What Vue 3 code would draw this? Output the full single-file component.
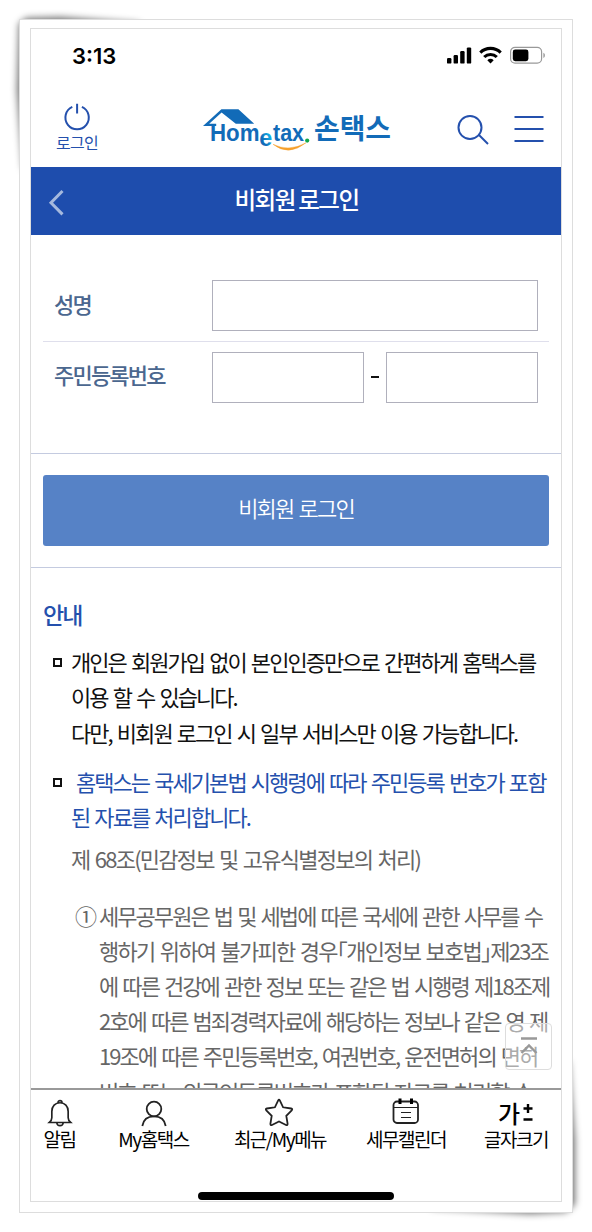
<script setup>
import { ref } from 'vue'

const name = ref('')
const idFront = ref('')
const idBack = ref('')

const notices = [
    {
        type: 'plain',
        lines: ['개인은 회원가입 없이 본인인증만으로 간편하게 홈택스를', '이용 할 수 있습니다.', '다만, 비회원 로그인 시 일부 서비스만 이용 가능합니다.']
    },
    {
        type: 'link',
        lines: ['홈택스는 국세기본법 시행령에 따라 주민등록 번호가 포함', '된 자료를 처리합니다.']
    }
]

const clause = [
    '세무공무원은 법 및 세법에 따른 국세에 관한 사무를 수',
    '행하기 위하여 불가피한 경우「개인정보 보호법」제23조',
    '에 따른 건강에 관한 정보 또는 같은 법 시행령 제18조제',
    '2호에 따른 범죄경력자료에 해당하는 정보나 같은 영 제',
    '19조에 따른 주민등록번호, 여권번호, 운전면허의 면허',
    '번호 또는 외국인등록번호가 포함된 자료를 처리할 수'
]

const tabs = [
    { icon: 'bell', label: '알림' },
    { icon: 'user', label: 'My홈택스' },
    { icon: 'star', label: '최근/My메뉴' },
    { icon: 'calendar', label: '세무캘린더' },
    { icon: 'size', label: '글자크기' }
]
</script>

<template>
    <div class="stage">
        <svg class="curl" width="592" height="1232" viewBox="0 0 592 1232">
            <polygon points="19,24 26,18 60,17 140,23 100,100 23,170 17,90" />
            <polygon points="569,1060 575,1140 575,1204 566,1212 530,1214 430,1208 500,1150" />
        </svg>
        <div class="frame">
            <div class="phone">
                <div class="status">
                    <span class="time">3:13</span>
                    <svg width="100" height="20" viewBox="0 0 100 20">
                        <rect x="1" y="12" width="4.4" height="5.6" rx="1.2" />
                        <rect x="7.6" y="9" width="4.4" height="8.6" rx="1.2" />
                        <rect x="14.2" y="5" width="4.4" height="12.6" rx="1.2" />
                        <rect x="20.8" y="1.4" width="4.4" height="16.2" rx="1.2" />
                        <g fill="none" stroke="#000" stroke-width="3.1">
                            <path d="M34.3 6.6a14.5 14.5 0 0 1 20.4 0" />
                            <path d="M38.2 11a9 9 0 0 1 12.6 0" />
                        </g>
                        <path d="M44.5 17.6l-3.2-3.4a4.8 4.8 0 0 1 6.4 0z" />
                        <rect x="64.6" y="1.4" width="31" height="15.8" rx="4.4" fill="none" stroke="#999" stroke-width="1.2" />
                        <rect x="66.8" y="3.6" width="15.6" height="11.6" rx="2.4" />
                        <path d="M97.4 6.8c2 .8 2 4.4 0 5.2z" fill="#999" />
                    </svg>
                </div>

                <header class="header">
                    <div class="login">
                        <svg width="28" height="28" viewBox="0 0 28 28">
                            <path d="M9.3 3.9a11.7 11.7 0 1 0 9.6 0M14.1 .8v9.8" />
                        </svg>
                        <span>로그인</span>
                    </div>
                    <svg class="logo" width="190" height="50" viewBox="202 105 190 50">
                        <defs>
                            <linearGradient id="eFill" x1="0" y1="1" x2="1" y2="0">
                                <stop offset=".35" stop-color="#126bb8" />
                                <stop offset=".75" stop-color="#12b5ea" />
                            </linearGradient>
                        </defs>
                        <path d="M203 126l18.4-16.8h17L254.2 123.7h-18.4l-14.2-11.2-12.4 11.3h7v2.2z" fill="#126bb8" />
                        <text class="latin" x="210" y="140.8" textLength="49.500" lengthAdjust="spacingAndGlyphs">Hom</text>
                        <text class="latin" x="259.3" y="146.3" textLength="13" lengthAdjust="spacingAndGlyphs" fill="url(#eFill)">e</text>
                        <text class="latin" x="273" y="140.8" textLength="31" lengthAdjust="spacingAndGlyphs">tax</text>
                        <path d="M273 144.3q15.500 12.500 33-1.500q-17 9.500-33 1.500z" fill="#f6a02c" stroke="#f6a02c" stroke-width=".4" />
                        <circle cx="307.200" cy="140.600" r="2.100" fill="#13a84b" />
                        <text class="hangul" x="314" y="139" textLength="77" lengthAdjust="spacingAndGlyphs">손택스</text>
                    </svg>
                    <svg class="search" width="34" height="34" viewBox="0 0 34 34">
                        <circle cx="14" cy="14.500" r="11.500" />
                        <path d="M22.500 21.500L32 31" />
                    </svg>
                    <svg class="menu" width="30" height="30" viewBox="0 0 30 30">
                        <path d="M.5 3h29M.5 15h29M.5 27h29" />
                    </svg>
                </header>

                <div class="titlebar">
                    <svg width="18" height="28" viewBox="0 0 18 28">
                        <path d="M15.500 2L4 13.700l11.500 11.700" />
                    </svg>
                    <h1>비회원 로그인</h1>
                </div>

                <section class="form">
                    <div class="field">
                        <label>성명</label>
                        <input v-model="name" type="text">
                    </div>
                    <div class="field">
                        <label>주민등록번호</label>
                        <input v-model="idFront" type="text">
                        <span class="dash"></span>
                        <input v-model="idBack" type="password">
                    </div>
                </section>

                <section class="action">
                    <button>비회원 로그인</button>
                </section>

                <section class="guide">
                    <h2>안내</h2>
                    <ul>
                        <li v-for="item in notices" :key="item.type" :class="item.type">
                            <p v-for="line in item.lines" :key="line">{{ line }}</p>
                        </li>
                    </ul>
                    <p class="article">제 68조(민감정보 및 고유식별정보의 처리)</p>
                    <div class="clause">
                        <span class="num">①</span>
                        <div>
                            <p v-for="line in clause" :key="line">{{ line }}</p>
                        </div>
                    </div>
                    <div class="totop">
                        <svg width="20" height="22" viewBox="0 0 20 22">
                            <path d="M2 2.500h16M2.500 17L10 9.500l7.500 7.500" />
                        </svg>
                    </div>
                </section>

                <nav class="tabs">
                    <div v-for="tab in tabs" :key="tab.icon" class="tab">
                        <svg v-if="tab.icon === 'bell'" width="26" height="30" viewBox="0 0 28 30">
                            <path d="M2.500 25.200h23c-2-1.800-2.700-3-2.700-5.200v-6.500c0-6-3.600-9.500-8.800-9.500s-8.800 3.500-8.800 9.500V20c0 2.200-.7 3.400-2.700 5.200zM11.800 4c0-3 4.400-3 4.400 0M10.500 25.500c.5 4.200 6.500 4.200 7 0" />
                        </svg>
                        <svg v-else-if="tab.icon === 'user'" width="28" height="30" viewBox="0 0 28 30">
                            <circle cx="14" cy="11" r="7.300" />
                            <path d="M2.300 28c1-6.500 5.700-9.700 11.700-9.700s10.700 3.200 11.700 9.700" />
                        </svg>
                        <svg v-else-if="tab.icon === 'star'" width="30" height="30" viewBox="0 0 30 30">
                            <path d="M13.200 2.400q.8-1.500 1.600 0l3.300 6.900 8 1.200q1.800.4.600 1.800l-5.400 5.500 1.300 8q0 1.800-1.600 1.200l-7-3.500-7 3.500q-1.600.6-1.600-1.200l1.300-8-5.400-5.500q-1.200-1.400.6-1.800l8-1.200z" />
                        </svg>
                        <svg v-else-if="tab.icon === 'calendar'" width="28" height="30" viewBox="0 0 28 30">
                            <rect x="1.500" y="3.500" width="24.500" height="21.500" rx="3.500" />
                            <path class="thin" d="M1.500 9.500h24.500M9 14.500h10M9 19.500h10" />
                            <path class="thick" d="M8 .5v5.500M19.500 .5v5.500" />
                        </svg>
                        <span v-else class="sizer">가<svg width="12" height="22" viewBox="0 0 12 22"><path d="M6 2v9M1.500 6.500h9M1.500 17.500h9" /></svg></span>
                        <span class="label">{{ tab.label }}</span>
                    </div>
                </nav>
                <div class="home"><i></i></div>
            </div>
        </div>
    </div>
</template>

<style>
body {
    background: #fff;
}
</style>

<style scoped>
* {
    box-sizing: border-box;
    margin: 0;
    padding: 0;
}

.stage {
    position: relative;
    width: 592px;
    height: 1232px;
    padding: 19px 0 0 19px;
    overflow: hidden;
    background: #fff;
    font-family: "Noto Sans CJK KR", sans-serif;
}

.curl {
    position: absolute;
    left: 0;
    top: 0;
    fill: rgba(0, 0, 0, 0.55);
    filter: blur(3.5px);
}

.frame {
    position: relative;
    width: 554px;
    height: 1194px;
    padding: 8px 10px;
    border: 1px solid #ddd;
    background: #fff;
}

.phone {
    width: 532px;
    height: 1174px;
    border: 1px solid #ddd;
    display: flex;
    flex-direction: column;
    overflow: hidden;
}

.status {
    height: 67px;
    padding: 17px 15px 0 41px;
    display: flex;
    justify-content: space-between;
    flex-shrink: 0;
}

.time {
    font: 600 22px/20px Inter, sans-serif;
}

.header {
    height: 71px;
    padding: 0 17px 0 24px;
    display: flex;
    flex-shrink: 0;
}

.header svg {
    fill: none;
    stroke: #2450ad;
    stroke-width: 2;
}

.login {
    width: 44px;
    padding-top: 7px;
    display: flex;
    flex-direction: column;
    align-items: center;
    color: #2450ad;
    font-size: 16px;
    line-height: 20px;
    letter-spacing: -0.8px;
}

.login span {
    margin-top: 1px;
    white-space: nowrap;
}

.header .logo {
    margin: 9px 0 0 103px;
    stroke: none;
    fill: #126bb8;
}

.latin {
    font: 700 23.5px "Liberation Sans", sans-serif;
}

.hangul {
    font: 700 28px "Noto Sans CJK KR", sans-serif;
}

.header .search {
    margin: 17px 0 0 64px;
}

.header .menu {
    margin: 18px 0 0 auto;
}

.titlebar {
    height: 68px;
    padding: 0 16px;
    display: flex;
    align-items: center;
    flex-shrink: 0;
    background: #1e4dad;
    color: #fff;
}

.titlebar svg {
    margin-top: 4px;
    fill: none;
    stroke: #a5b9de;
    stroke-width: 3;
}

.titlebar h1 {
    flex: 1;
    padding: 0 17px 4px 0;
    text-align: center;
    font-size: 23.5px;
    font-weight: 500;
    letter-spacing: -1.6px;
}

.form {
    height: 219px;
    padding: 35px 12px 0;
    flex-shrink: 0;
    border-bottom: 1px solid #c4cbe0;
}

.field {
    height: 72px;
    padding: 10px 11px;
    display: flex;
    align-items: center;
}

.field:first-child {
    border-bottom: 1px solid #dfdfec;
}

.field + .field {
    height: 70px;
}

.field label {
    width: 158px;
    padding-bottom: 6px;
    flex-shrink: 0;
    color: #4b678f;
    font-size: 22px;
    font-weight: 500;
    letter-spacing: -1.8px;
}

.field input {
    flex: 1;
    min-width: 0;
    height: 51px;
    border: 1px solid #b0b0bc;
    outline: 0;
    background: #fff;
}

.dash {
    width: 8px;
    height: 2px;
    margin: 0 7px;
    background: #111;
}

.action {
    height: 114px;
    padding: 21px 12px;
    flex-shrink: 0;
    border-bottom: 1px solid #c4cbe0;
}

.action button {
    width: 100%;
    height: 71px;
    padding-bottom: 7px;
    border: 0;
    border-radius: 3px;
    background: #5682c6;
    color: #fff;
    font-family: inherit;
    font-size: 22px;
    font-weight: 350;
    letter-spacing: -1.8px;
    word-spacing: 2px;
}

.guide {
    position: relative;
    flex: 1;
    min-height: 0;
    padding: 29px 0 0 12px;
    overflow: hidden;
    color: #666;
    font-size: 22px;
    line-height: 35.2px;
    letter-spacing: -1.95px;
    word-spacing: 2.1px;
    white-space: nowrap;
}

.guide h2 {
    color: #2450ad;
    font-size: 23px;
    font-weight: 500;
}

.guide ul {
    margin-top: 12px;
    list-style: none;
}

.guide li {
    position: relative;
    margin-bottom: 14.2px;
    padding-left: 28px;
    color: #111;
}

.guide li::before {
    content: "";
    position: absolute;
    left: 10px;
    top: 14px;
    box-sizing: border-box;
    width: 9px;
    height: 9px;
    border: 2px solid #111;
}

.guide li.link {
    margin-bottom: 7px;
    color: #2450ad;
}

.link p:first-child {
    padding-left: 5px;
}

.article {
    padding-left: 28px;
    letter-spacing: -1.75px;
}

.clause {
    margin-top: 21px;
    padding-left: 32px;
    display: flex;
    font-feature-settings: "halt";
}

.clause p:nth-child(2) {
    letter-spacing: -1.74px;
}

.num {
    width: 24px;
    flex-shrink: 0;
}

.totop {
    position: absolute;
    right: 9px;
    bottom: 18px;
    width: 47px;
    height: 47px;
    border: 1px solid #ddd;
    border-radius: 4px;
    background: rgba(255, 255, 255, 0.45);
    display: flex;
    align-items: center;
    justify-content: center;
}

.totop svg {
    fill: none;
    stroke: #999;
    stroke-width: 2.4;
}

.tabs {
    height: 68px;
    padding-top: 8px;
    display: grid;
    grid-template-columns: 57px 131px 122px 130px 90px;
    flex-shrink: 0;
    border-top: 2px solid #999;
}

.tab {
    display: flex;
    flex-direction: column;
    align-items: center;
}

.tab svg {
    flex-shrink: 0;
    fill: none;
    stroke: #222;
    stroke-width: 1.8;
}

.tab .thin {
    stroke-width: 1;
}

.tab .thick {
    stroke: #000;
    stroke-width: 3;
}

.label {
    margin-top: -1px;
    color: #000;
    font-size: 19px;
    line-height: 24px;
    letter-spacing: -1.5px;
    white-space: nowrap;
}

.sizer {
    height: 30px;
    display: flex;
    align-items: center;
    gap: 2px;
    font-size: 24px;
    font-weight: 500;
    line-height: 28px;
}

.sizer svg {
    stroke: #000;
    stroke-width: 2.4;
}

.home {
    flex-shrink: 0;
    height: 45px;
    display: flex;
    justify-content: center;
    align-items: flex-end;
    padding-bottom: 1px;
}

.home i {
    width: 196px;
    height: 8px;
    border-radius: 4px;
    background: #000;
}
</style>
